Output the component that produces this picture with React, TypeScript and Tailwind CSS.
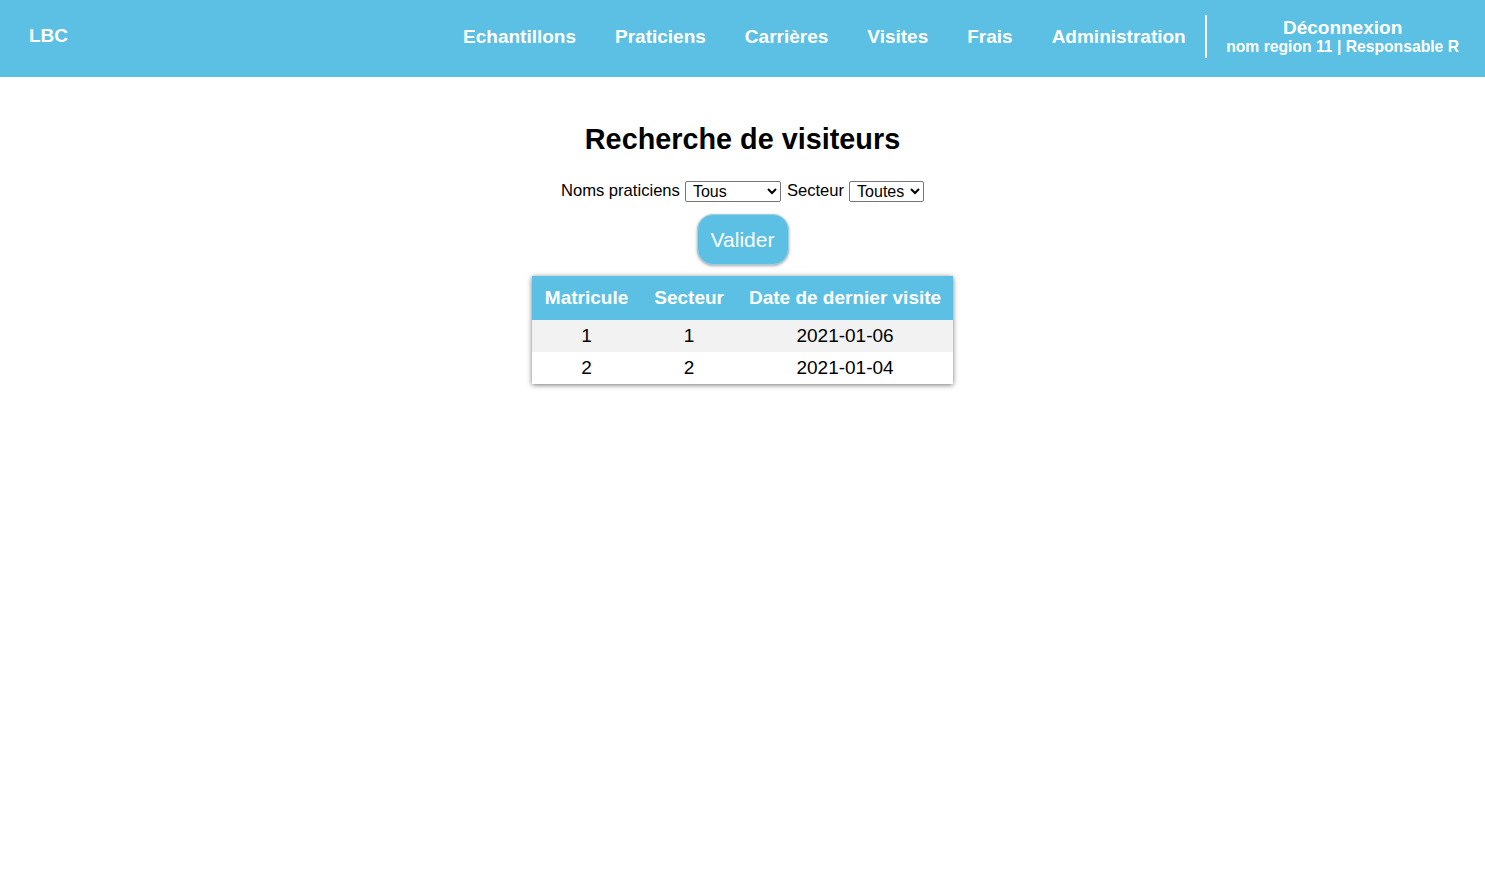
import React from 'react';

const NAV = ['Echantillons', 'Praticiens', 'Carrières', 'Visites', 'Frais', 'Administration'];

const ROWS = [
  { matricule: '1', secteur: '1', date: '2021-01-06' },
  { matricule: '2', secteur: '2', date: '2021-01-04' },
];

export default function App() {
  return (
    <div className="min-h-screen bg-white font-['Liberation_Sans',Arial,sans-serif] text-black">
      <header className="flex h-[77px] items-center bg-[#5bc0e3] pb-[5px] pl-[29px] pr-[26px] text-white">
        <div className="text-[19px] font-bold">LBC</div>
        <nav className="ml-auto flex items-center">
          {NAV.map((item) => (
            <a key={item} className="px-[19.5px] text-[19px] font-bold leading-none">
              {item}
            </a>
          ))}
        </nav>
        <div className="h-[43px] w-[2px] bg-white" />
        <div className="flex flex-col items-center pl-[19px] font-bold">
          <span className="text-[19px] leading-[21px]">Déconnexion</span>
          <span className="text-[15.7px] leading-[18px]">nom region 11 | Responsable R</span>
        </div>
      </header>

      <main className="flex flex-col items-center">
        <h1 className="mt-[46px] text-[28.8px] font-bold leading-[33px]">Recherche de visiteurs</h1>

        <form className="mt-[23px] flex items-center gap-[5px] text-[16.6px]">
          <label htmlFor="noms">Noms praticiens</label>
          <select
            id="noms"
            className="h-[21px] w-[96px] rounded-[2px] border border-[#767676] bg-white px-[3px] text-[16px] leading-none"
            defaultValue="tous"
          >
            <option value="tous">Tous</option>
          </select>
          <label htmlFor="secteur" className="ml-[1px]">Secteur</label>
          <select
            id="secteur"
            className="h-[21px] w-[75px] rounded-[2px] border border-[#767676] bg-white px-[3px] text-[16px] leading-none"
            defaultValue="toutes"
          >
            <option value="toutes">Toutes</option>
          </select>
        </form>

        <button
          type="button"
          className="mt-[10px] h-[51px] w-[92px] rounded-[16px] border border-[#9fcfe0] bg-[#5bc0e3] text-[21px] text-white shadow-[0_1px_3px_rgba(0,0,0,0.35)]"
        >
          Valider
        </button>

        <table className="mt-[11px] border-collapse shadow-[0_1px_5px_rgba(0,0,0,0.55)]">
          <thead>
            <tr className="bg-[#5bc0e3] text-white">
              <th className="h-[44px] px-[13px] text-[19px] font-bold">Matricule</th>
              <th className="h-[44px] px-[13px] text-[19px] font-bold">Secteur</th>
              <th className="h-[44px] px-[12px] text-[19px] font-bold">Date de dernier visite</th>
            </tr>
          </thead>
          <tbody>
            {ROWS.map((r, i) => (
              <tr key={r.matricule} className={i % 2 === 0 ? 'bg-[#f2f2f2]' : 'bg-white'}>
                <td className="h-[32px] px-[13px] text-center text-[19px]">{r.matricule}</td>
                <td className="h-[32px] px-[13px] text-center text-[19px]">{r.secteur}</td>
                <td className="h-[32px] px-[12px] text-center text-[19px]">{r.date}</td>
              </tr>
            ))}
          </tbody>
        </table>
      </main>
    </div>
  );
}
